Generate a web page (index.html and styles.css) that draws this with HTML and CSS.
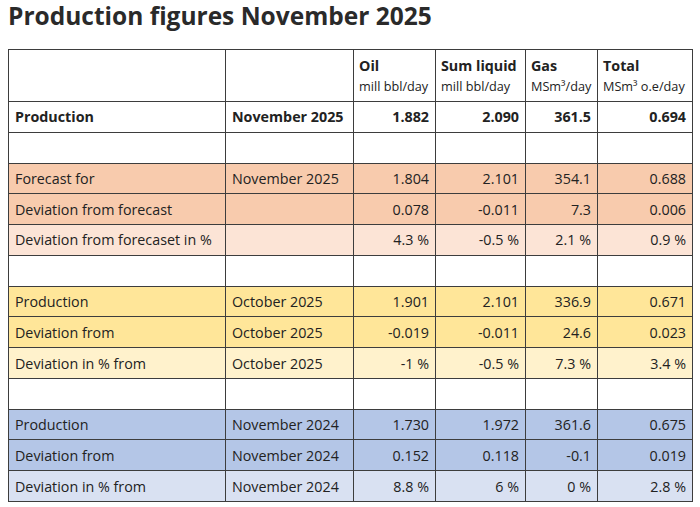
FILE: index.html
```html
<!DOCTYPE html>
<html lang="en">
<head>
<meta charset="utf-8">
<title>Production figures November 2025</title>
<link rel="stylesheet" href="styles.css">
</head>
<body>
<h1 class="title">Production figures November 2025</h1>
<table class="figures">
  <colgroup>
    <col class="c-label">
    <col class="c-period">
    <col class="c-oil">
    <col class="c-liquid">
    <col class="c-gas">
    <col class="c-total">
  </colgroup>
  <thead>
    <tr>
      <th></th>
      <th></th>
      <th><span class="h-main">Oil</span><span class="h-sub">mill bbl/day</span></th>
      <th><span class="h-main">Sum liquid</span><span class="h-sub">mill bbl/day</span></th>
      <th><span class="h-main">Gas</span><span class="h-sub">MSm³/day</span></th>
      <th><span class="h-main">Total</span><span class="h-sub">MSm³ o.e/day</span></th>
    </tr>
  </thead>
  <tbody>
    <tr class="bold">
      <td>Production</td><td>November 2025</td>
      <td class="num">1.882</td><td class="num">2.090</td><td class="num">361.5</td><td class="num">0.694</td>
    </tr>
    <tr class="blank"><td></td><td></td><td></td><td></td><td></td><td></td></tr>
    <tr class="orange">
      <td>Forecast for</td><td>November 2025</td>
      <td class="num">1.804</td><td class="num">2.101</td><td class="num">354.1</td><td class="num">0.688</td>
    </tr>
    <tr class="orange">
      <td>Deviation from forecast</td><td></td>
      <td class="num">0.078</td><td class="num">-0.011</td><td class="num">7.3</td><td class="num">0.006</td>
    </tr>
    <tr class="orange-light">
      <td>Deviation from forecaset in %</td><td></td>
      <td class="num">4.3 %</td><td class="num">-0.5 %</td><td class="num">2.1 %</td><td class="num">0.9 %</td>
    </tr>
    <tr class="blank"><td></td><td></td><td></td><td></td><td></td><td></td></tr>
    <tr class="yellow">
      <td>Production</td><td>October 2025</td>
      <td class="num">1.901</td><td class="num">2.101</td><td class="num">336.9</td><td class="num">0.671</td>
    </tr>
    <tr class="yellow">
      <td>Deviation from</td><td>October 2025</td>
      <td class="num">-0.019</td><td class="num">-0.011</td><td class="num">24.6</td><td class="num">0.023</td>
    </tr>
    <tr class="yellow-light">
      <td>Deviation in % from</td><td>October 2025</td>
      <td class="num">-1 %</td><td class="num">-0.5 %</td><td class="num">7.3 %</td><td class="num">3.4 %</td>
    </tr>
    <tr class="blank"><td></td><td></td><td></td><td></td><td></td><td></td></tr>
    <tr class="blue">
      <td>Production</td><td>November 2024</td>
      <td class="num">1.730</td><td class="num">1.972</td><td class="num">361.6</td><td class="num">0.675</td>
    </tr>
    <tr class="blue">
      <td>Deviation from</td><td>November 2024</td>
      <td class="num">0.152</td><td class="num">0.118</td><td class="num">-0.1</td><td class="num">0.019</td>
    </tr>
    <tr class="blue-light">
      <td>Deviation in % from</td><td>November 2024</td>
      <td class="num">8.8 %</td><td class="num">6 %</td><td class="num">0 %</td><td class="num">2.8 %</td>
    </tr>
  </tbody>
</table>
</body>
</html>
```

FILE: styles.css
```css
html, body {
  margin: 0;
  padding: 0;
  background: #ffffff;
}

body {
  padding: 0 8px;
  font-family: "Open Sans", "Noto Sans", "Liberation Sans", sans-serif;
  font-size: 14.3px;
  color: #222222;
}

.title {
  margin: 0 0 18px 0;
  font-size: 24.5px;
  line-height: 31px;
  font-weight: 700;
  color: #2a2a2a;
}

.figures {
  border-collapse: collapse;
  table-layout: fixed;
  width: 684px;
}

.c-label { width: 217px; }
.c-period { width: 128px; }
.c-oil { width: 82px; }
.c-liquid { width: 90px; }
.c-gas { width: 72px; }
.c-total { width: 95px; }

.figures th,
.figures td {
  border: 1px solid #3d3d3d;
  padding: 0 6px;
  text-align: left;
  white-space: nowrap;
}

.figures th {
  padding: 6px 5px 4px 5px;
  vertical-align: top;
  height: 51px;
  box-sizing: border-box;
}

.h-main {
  display: block;
  font-weight: 700;
  line-height: 20px;
}

.h-sub {
  display: block;
  font-weight: 400;
  font-size: 12.7px;
  line-height: 21px;
}

.figures td {
  height: 30.77px;
  box-sizing: border-box;
  line-height: 19px;
  vertical-align: middle;
}

.figures td.num {
  text-align: right;
}

.bold td { font-weight: 700; }

.orange td { background: #f8cbad; }
.orange-light td { background: #fce4d6; }
.yellow td { background: #ffe699; }
.yellow-light td { background: #fff2cc; }
.blue td { background: #b4c6e7; }
.blue-light td { background: #d9e1f2; }
```
